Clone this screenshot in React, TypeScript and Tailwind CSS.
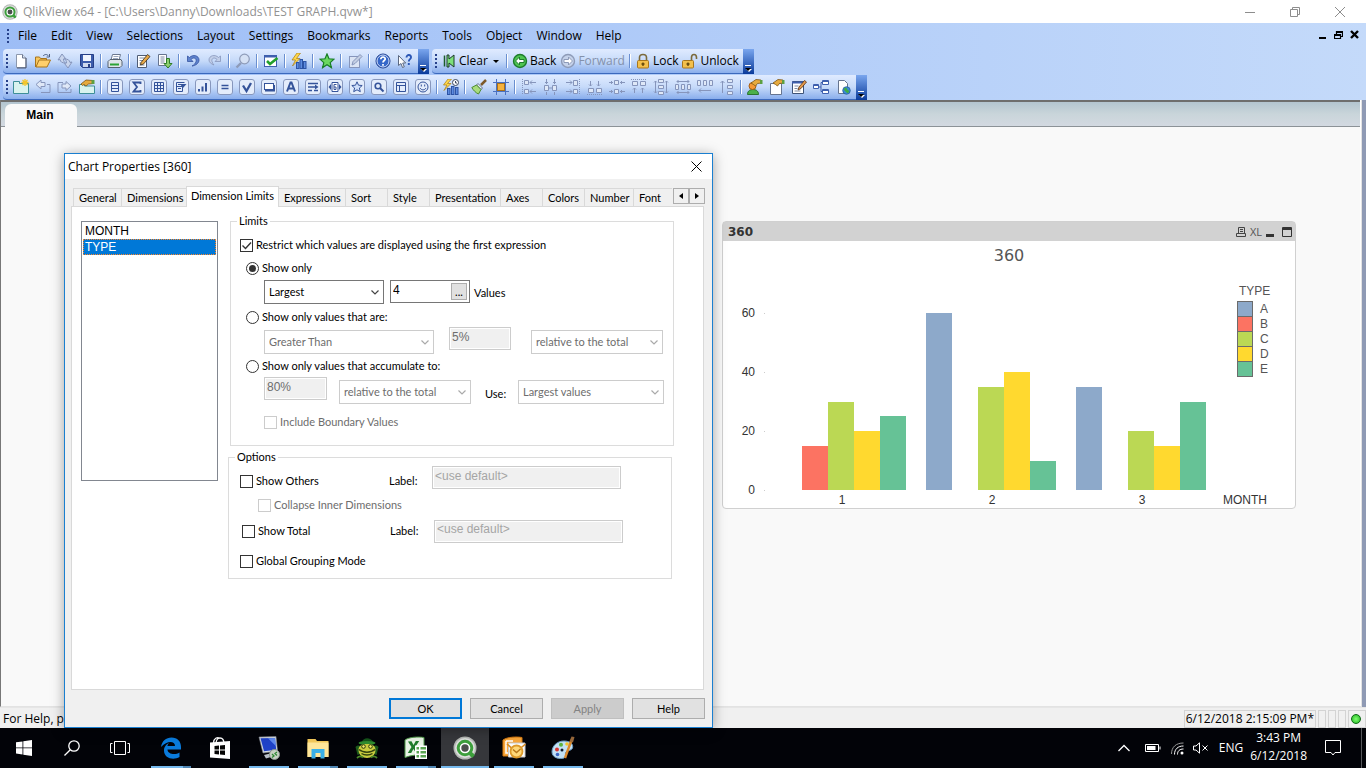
import React from "react";

type Kids = { children?: React.ReactNode };

const Ic = ({ children, size = 16 }: Kids & { size?: number }) => (
  <svg width={size} height={size} viewBox="0 0 16 16" fill="none" aria-hidden="true" className="shrink-0">
    {children}
  </svg>
);

const Framed = ({ children }: Kids) => (
  <Ic>
    <rect x="0.5" y="0.5" width="15" height="15" rx="2.5" fill="#e3ecfb" stroke="#8797bd" />
    {children}
  </Ic>
);

const N = "#34539a";
const G = "#8695bb";

const page = <path d="M3.5 1.5h6l3 3v10h-9z" fill="#fff" stroke="#66748f" />;

const fileIcons: Record<string, React.ReactNode> = {
  "New": <Ic><path d="M3.5 1.5h6l3.500 3.500v9.500h-9.500z" fill="#fff" stroke="#8c98ad" /><path d="M9.500 1.500v3.500h3.500" fill="#dbe4f2" stroke="#6c7890" /><path d="M13 5v10H4" stroke="#4e5970" /></Ic>,
  "Open": <Ic><path d="M.5 14v-10h4l1 1.500h6v3" fill="#f6c65d" stroke="#a8741b" /><path d="M1 14l3-7h11.500l-3.500 7z" fill="#ffcf6b" stroke="#a8741b" /><path d="M8 3c2-2 4-2 5.500 0M14.500 1v3h-3" stroke="#4c5f83" /></Ic>,
  "Reload document": <Ic><path d="M1 7l4-6 3.500 4.500-2 .5c0 2 .5 3 2 4-3.500 0-5-1-5.500-3.500z" fill="#c9d5ec" stroke={G} /><path d="M15 9l-4 6-3.500-4.500 2-.5c0-2-.5-3-2-4 3.500 0 5 1 5.500 3.500z" fill="#c9d5ec" stroke={G} /></Ic>,
  "Save": <Ic><path d="M1.500 1.500h13v13h-11l-2-2z" fill="#3c5cab" stroke="#263f86" /><rect x="4" y="2" width="8" height="6" fill="#f1f5fd" /><rect x="4" y="10" width="8" height="4" fill="#cfd9ed" /><rect x="9" y="11" width="2" height="3" fill="#263f86" /></Ic>,
  "Print": <Ic><path d="M4 7l1.500-5.500h8L12 7z" fill="#fff" stroke="#6b7890" /><path d="M6.500 3.500h5M6 5.500h5" stroke="#9ca9c0" /><path d="M1 8.500l2-2h11l1 2v4l-2 2H1z" fill="#dfe5ea" stroke="#55616f" /><path d="M3 11.500h9" stroke="#2ba335" strokeWidth="2" /></Ic>,
  "Edit Script": <Ic><path d="M2.500 2.500h9v12h-9z" fill="#fff" stroke="#4f5c74" /><path d="M4.500 5h5M4.500 7.500h4M4.500 10h3M4.500 12h5" stroke="#7e8ba3" /><path d="M6 9.500L12.500 1.500l2.500 2L8.500 11 5.500 12z" fill="#e8a948" stroke="#3a2a14" strokeWidth=".8" /></Ic>,
  "Run Script": <Ic><path d="M1.500 1.500h8v11h-8z" fill="#fff" stroke="#66748f" /><path d="M3.500 4h4M3.500 6h4M3.500 8h4M3.500 10h4" stroke="#7e8ba3" /><path d="M9.500 5.500h3v5H15l-4 4.500-4-4.500h2.500z" fill="#8ccf6d" stroke="#2f7d27" /></Ic>,
  "Undo": <Ic><path d="M2.500 3v5.500H8L6 6.500c2.500-3 6-1 5 2-.5 2-2 3.500-4 4.500 4-.5 7-3 7-6 0-4.500-6-6-9.500-2.500z" fill="#5f83ce" stroke="#35539f" strokeWidth=".8" /></Ic>,
  "Redo": <Ic><path d="M13.500 3v5.500H8l2-2c-2.500-3-6-1-5 2 .5 1.500 1 2.500 2 3.500C4 11 2 9 2 7c0-4.500 6-6 9.500-2.500z" fill="#c2cfe9" stroke={G} strokeWidth=".8" /></Ic>,
  "Search": <Ic><circle cx="9.500" cy="6" r="4.800" fill="#d5e1f4" stroke="#8e9bb8" strokeWidth="1.200" /><path d="M6 10l-4.500 4.500" stroke="#8e9bb8" strokeWidth="2.400" /></Ic>,
  "Current Selections": <Ic><rect x="1.500" y="2.500" width="12" height="11" fill="#fff" stroke="#3e5fae" /><path d="M1 3.500h13" stroke="#3e5fae" strokeWidth="2" /><path d="M4 8l3 3 7.500-6" stroke="#23a02c" strokeWidth="2.600" /></Ic>,
  "Quick Chart Wizard": <Ic><path d="M6 0L1 7H4.500L1.500 13 9 5.500H5.500L9.500 0z" fill="#ffd84c" stroke="#a87a10" strokeWidth=".7" /><rect x="5.500" y="9.500" width="2.500" height="6" fill="#5d8ce0" stroke="#2c53a5" /><rect x="9" y="6.500" width="2.500" height="9" fill="#5d8ce0" stroke="#2c53a5" /><rect x="12.500" y="8.500" width="2.500" height="7" fill="#5d8ce0" stroke="#2c53a5" /></Ic>,
  "Add Bookmark": <Ic><path d="M8 1l2 4.800 5 .4-3.800 3.400 1.200 5L8 11.800l-4.400 2.800 1.200-5L1 6.200l5-.4z" fill="#6bd860" stroke="#177d24" strokeWidth="1.200" /></Ic>,
  "Add Note": <Ic><rect x="2.500" y="3.500" width="10" height="11" fill="#dbe4f4" stroke={G} /><path d="M5 12l1-3.500 7-7 2 2-7 7z" fill="#c3cee3" stroke={G} /></Ic>,
  "Help Topics": <Ic><circle cx="8" cy="8" r="7" fill="#3567c9" stroke="#1f3f8f" /><circle cx="8" cy="8" r="6" stroke="#cfdcf7" /><path d="M5.800 6.200c0-3 4.600-2.800 4.400 0C10 7.600 8 7.600 8 9.500M8 11v1.800" stroke="#fff" strokeWidth="1.700" /></Ic>,
  "What's This?": <Ic><path d="M1.500 2.500v10l2.500-2 1.500 4 1.800-.7-1.600-3.800h3z" fill="#fff" stroke="#5b6880" /><path d="M9.500 4.500c0-3.500 5-3 4.500 0-.2 1.800-2.200 1.600-2.200 4M11.800 10v2" stroke="#2a56b5" strokeWidth="1.900" /></Ic>,
};

const sheetIcons: Record<string, React.ReactNode> = {
  "Add Sheet": <Ic><path d="M.5 14.500v-12h6v2h9v10z" fill="#d9f3ee" stroke="#3e8f98" /><path d="M12 0v7M8.500 3.500h7M9.500 1l5 5M14.500 1l-5 5" stroke="#f4c52b" strokeWidth="1.300" /></Ic>,
  "Promote Sheet": <Ic><path d="M1 5.500l5-4.500v2.500h4v4H6V10z" fill="#dfe8f7" stroke={G} /><path d="M6 13.500h9v-8h-3" stroke={G} /></Ic>,
  "Demote Sheet": <Ic><path d="M14 7L9 2.500V5H5v4h4v2.500z" fill="#dfe8f7" stroke={G} /><path d="M9 13.500H1v-10h5M9 13.500h5V10" stroke={G} /></Ic>,
  "Sheet Properties": <Ic><path d="M.5 14.500v-9h5v1.500h10v7.500z" fill="#d9f3ee" stroke="#3e8f98" /><path d="M2 5l5-4 7 .5.500 3-5 .500L7 7 5 5.500 3.500 6.500z" fill="#e6aa3e" stroke="#7d5614" strokeWidth=".8" /><rect x="12.500" y="1" width="3" height="4" fill="#5d9f40" /></Ic>,
};

const objectIcons: Record<string, React.ReactNode> = {
  "List Box": <Framed><path d="M4.500 3.500h7v9h-7zM4.500 6.500h7M4.500 9.500h7" stroke={N} /></Framed>,
  "Statistics Box": <Framed><path d="M11.500 5V3.500h-7L8 8l-3.500 4.500h7V11" stroke={N} strokeWidth="1.800" /></Framed>,
  "Table Box": <Framed><path d="M3.500 3.500h9v9h-9zM3.500 6.500h9M3.500 9.500h9M6.500 3.500v9M9.500 3.500v9" stroke={N} /></Framed>,
  "Multi Box": <Framed><path d="M3.500 3.500h8M3.500 3.500v9h6v-5M3.500 7.500h6M5 9.500h3M5 5.500h3" stroke={N} /><path d="M7 5h6.500L10 9z" fill={N} /></Framed>,
  "Chart": <Framed><path d="M4 12.500V10M7.500 12.500V7.500M11 12.500V4" stroke={N} strokeWidth="2" /></Framed>,
  "Input Box": <Framed><path d="M4.500 6.500h7M4.500 9.500h7" stroke={N} strokeWidth="1.600" /></Framed>,
  "Current Selections Box": <Framed><path d="M4 6.500l3.500 5.500 4.500-8" stroke={N} strokeWidth="2.300" /></Framed>,
  "Button": <Framed><rect x="3.500" y="4.500" width="9" height="6" fill="#fff" stroke={N} /><path d="M4 11.500h9V6" stroke={N} strokeWidth="2" /></Framed>,
  "Text Object": <Framed><path d="M4 12.500L7.500 3.500h1L12 12.500M5.500 9.500h5" stroke={N} strokeWidth="2" /></Framed>,
  "Line/Arrow Object": <Framed><path d="M3 4.500h10M3 8h8M3 11.500h4M9 11.500h4" stroke={N} strokeWidth="1.300" /><path d="M10 5.500L13.500 8 10 10.500z" fill={N} /></Framed>,
  "Slider/Calendar Object": <Framed><path d="M5 3.500h6v9H5z" fill="#fff" stroke={N} /><path d="M4 5L1.500 8 4 11zM12 5l2.500 3-2.500 3z" fill={N} /><path d="M9.500 5.500H7v5h2V8H7" stroke={N} /></Framed>,
  "Bookmark Object": <Framed><path d="M8 2.800l1.500 3.400 3.700.3-2.800 2.500.9 3.700L8 10.800l-3.300 1.900.9-3.700-2.800-2.500 3.700-.3z" fill="#cfdffa" stroke={N} /></Framed>,
  "Search Object": <Framed><circle cx="7" cy="7" r="2.800" stroke={N} strokeWidth="1.600" /><path d="M9 9l3.500 3.500" stroke={N} strokeWidth="2" /></Framed>,
  "Container": <Framed><path d="M3.500 3.500h9v9h-9zM3.500 6.500h9M6.500 6.500v6" stroke={N} /></Framed>,
  "Custom Object": <Framed><circle cx="8" cy="8" r="5" stroke={N} /><path d="M6.300 5.500v2M9.700 5.500v2M5 9c1.500 2.500 4.500 2.500 6 0" stroke={N} /></Framed>,
};

const chartWiz: Record<string, React.ReactNode> = {
  "Time Chart Wizard": <Ic><path d="M5 0L.5 6H4L1 11.500 8 4.500H4.500L8.500 0z" fill="#ffd84c" stroke="#a87a10" strokeWidth=".7" /><rect x="4.500" y="9.500" width="2.500" height="6" fill="#5d8ce0" stroke="#2c53a5" /><rect x="8.500" y="7.500" width="2.500" height="8" fill="#5d8ce0" stroke="#2c53a5" /><rect x="12.500" y="8.500" width="2.500" height="7" fill="#5d8ce0" stroke="#2c53a5" /><circle cx="12.500" cy="3.500" r="3" fill="#fff" stroke="#3b475e" /><path d="M12.500 2v2H14" stroke="#3b475e" /></Ic>,
};

const formatIcons: Record<string, React.ReactNode> = {
  "Format Painter": <Ic><path d="M15 1l-5 5" stroke="#7d5a2a" strokeWidth="2.500" /><path d="M7 4.500l4.500 4.500-1.500 1.500L5.500 6z" fill="#e7ecf5" stroke="#65728d" /><path d="M5.500 6L10 10.500 7.500 15C5 14 2 11 .8 8.500z" fill="#a9dc7e" stroke="#4d8b2f" /></Ic>,
  "Design Grid": <Ic><path d="M3.500 0v16M12.500 0v16M0 3.500h16M0 12.500h16" stroke="#4b72c2" /><rect x="4.500" y="4.500" width="7" height="7" fill="#f6b23c" stroke="#a8701a" /></Ic>,
};

const alignIcons: Record<string, React.ReactNode> = {
  "Align Left": <Ic><path d="M1.500 0v16" stroke={G} strokeDasharray="1 1" /><path d="M3.500 1.500h4v4h-4zM3.500 10.500h4v4h-4z" fill="#dfe8f7" stroke={G} /><path d="M9 3.500h6M11 1.500l-2 2 2 2M9 12.500h6M11 10.500l-2 2 2 2" stroke={G} /></Ic>,
  "Center Horizontally": <Ic><path d="M1.500 6.500h4v5h-4zM9.500 6.500h4v5h-4z" fill="#dfe8f7" stroke={G} /><path d="M3.500 0v5M11.500 0v5M2 3.500h3M10 3.500h3M3.500 16v-3M11.500 16v-3M6 9h3" stroke={G} /></Ic>,
  "Align Right": <Ic><path d="M14.500 0v16" stroke={G} strokeDasharray="1 1" /><path d="M8.500 1.500h4v5h-4zM8.500 10.500h4v4h-4z" fill="#dfe8f7" stroke={G} /><path d="M1 3.500h6M5 1.500l2 2-2 2M1 12.500h6M5 10.500l2 2-2 2" stroke={G} /></Ic>,
  "Align Bottom": <Ic><path d="M0 15.500h16" stroke={G} strokeDasharray="1 1" /><path d="M1.500 9.500h5v4h-5zM9.500 9.500h5v4h-5z" fill="#dfe8f7" stroke={G} /><path d="M3.500 2v5M2 5.500l1.500 1.500L5 5.500M11.500 2v5M10 5.500l1.500 1.500L13 5.500" stroke={G} /></Ic>,
  "Center Vertically": <Ic><path d="M5.500 1.500h4v4h-4zM5.500 10.500h4v4h-4z" fill="#dfe8f7" stroke={G} /><path d="M0 3.500h4M11 3.500h5M0 12.500h4M11 12.500h5M2.500 2v3M12.500 2v3M2.500 11v3M12.500 11v3" stroke={G} /></Ic>,
  "Align Top": <Ic><path d="M0 .5h16" stroke={G} strokeDasharray="1 1" /><path d="M1.500 2.500h5v4h-5zM9.500 2.500h5v4h-5z" fill="#dfe8f7" stroke={G} /><path d="M3.500 9v5M2 10.500L3.500 9 5 10.500M11.500 9v5M10 10.500L11.500 9l1.500 1.500" stroke={G} /></Ic>,
  "Space Horizontally": <Ic><path d="M5.500.5h5v3h-5zM5.500 6.500h5v3h-5zM5.500 12.500h5v3h-5z" fill="#dfe8f7" stroke={G} /><path d="M2.500 2v12M1 3.500L2.500 2 4 3.500M1 12.500L2.500 14 4 12.500M13.500 2v12M12 3.500L13.500 2 15 3.500M12 12.500l1.500 1.500 1.500-1.500" stroke={G} /></Ic>,
  "Space Vertically": <Ic><path d="M.5 5.500h3v5h-3zM6.500 5.500h3v5h-3zM12.500 5.500h3v5h-3z" fill="#dfe8f7" stroke={G} /><path d="M2 2.500h12M3.500 1L2 2.500 3.500 4M12.500 1L14 2.500 12.500 4M2 13.500h12M3.500 12L2 13.500 3.500 15M12.500 12l1.500 1.500-1.500 1.500" stroke={G} /></Ic>,
  "Adjust Left": <Ic><path d="M.5 1.500h3v5h-3zM6.500 1.500h3v5h-3zM12.500 1.500h3v5h-3z" fill="#dfe8f7" stroke={G} /><path d="M2 11.500h12M4 9.500l-2 2 2 2" stroke={G} /></Ic>,
  "Adjust Top": <Ic><path d="M8.500.5h5v3h-5zM8.500 6.500h5v3h-5zM8.500 12.500h5v3h-5z" fill="#dfe8f7" stroke={G} /><path d="M3.500 2v12M1.500 4l2-2 2 2" stroke={G} /></Ic>,
};

const hand = <><path d="M4 4l5-3.500 5 .5.500 3-4 .500-2 2.500-2-1.500z" fill="#e6aa3e" stroke="#7d5614" strokeWidth=".8" /><rect x="13" y="1" width="2.500" height="4" fill="#5d9f40" /></>;
const propIcons: Record<string, React.ReactNode> = {
  "User Preferences": <Ic><path d="M.5 15.500c0-4 3-5 5.500-5s5.500 1 5.500 5z" fill="#4bb04a" stroke="#2a7330" /><circle cx="5.500" cy="7" r="3.500" fill="#f59a35" stroke="#a85d12" />{hand}</Ic>,
  "Document Properties": <Ic><path d="M1.500 4.500h11v11h-11z" fill="#fff" stroke="#66748f" />{hand}</Ic>,
  "Edit Module": <Ic><path d="M1.500 2.500h11v12h-11z" fill="#fff" stroke="#3f5478" /><path d="M1 3.500h12" stroke="#3e5fae" strokeWidth="2" /><path d="M3.500 7h4M3.500 9.500h3M3.500 12h6" stroke="#7e8ba3" /><path d="M7 11l1-3 5.500-6.500 2 1.500-5.500 6.500z" fill="#e49a4c" stroke="#5b3413" strokeWidth=".8" /></Ic>,
  "Table Viewer": <Ic><path d="M5 8h3M8 3.500v9M8 3.500h2M8 12.500h2" stroke="#3e5fae" /><path d="M.5 5.500h5v4h-5zM9.500 1.500h6v4h-6zM9.500 10.500h6v4h-6z" fill="#fff" stroke="#3e5fae" /><path d="M.5 6.500h5M9.500 2.500h6M9.500 11.500h6" stroke="#3e5fae" /></Ic>,
  "WebView Mode": <Ic>{page}<circle cx="11.500" cy="11.500" r="3.800" fill="#3c87d8" stroke="#205a94" strokeWidth=".7" /><path d="M9 10c1-2 3-1 3 0s2 1 2 2.500-2 2-2.500 1S9 12 9 10z" fill="#3fae45" /></Ic>,
};

const Grip = () => (
  <span className="flex w-[7px] shrink-0 flex-col items-center justify-center gap-[2px]">
    {[0, 1, 2, 3].map((i) => (
      <i key={i} className="block size-[2px] bg-[#27418b]" />
    ))}
  </span>
);
const Sep = () => <span className="mx-[2px] my-[5px] w-[2px] shrink-0 border-l border-[#6a8fd0] bg-white" />;
const Tools = ({ set }: { set: Record<string, React.ReactNode> }) => (
  <>
    {Object.entries(set).map(([name, icon]) => (
      <button key={name} type="button" aria-label={name} className="flex w-[22px] shrink-0 items-center justify-center">
        {icon}
      </button>
    ))}
  </>
);
const pick = (...names: string[]) => Object.fromEntries(names.map((n) => [n, fileIcons[n]]));

const Bar = ({ children, label }: Kids & { label: string }) => (
  <div role="toolbar" aria-label={label} className="flex h-[25px] shrink-0">
    <div className="flex rounded-l-sm border-b border-[#3b69bd] bg-linear-to-b from-[#e0ebff] via-[#c6daf9] to-[#8aaeec]">
      <Grip />
      {children}
      <span className="w-[2px]" />
    </div>
    <button type="button" aria-label="Toolbar options" className="flex w-[11px] items-end justify-center bg-linear-to-b from-[#7aa6ee] to-[#093a9b] pb-[2px]">
      <svg width="7" height="7" viewBox="0 0 7 7" aria-hidden="true">
        <path d="M0 .5h6" stroke="#fff" />
        <path d="M1 4l3 3 3-3z" fill="#fff" />
        <path d="M0 3h6L3 6z" fill="#000" />
      </svg>
    </button>
  </div>
);

const TextTool = ({ icon, children, off }: Kids & { icon: React.ReactNode; off?: boolean }) => (
  <button type="button" disabled={off} className={`flex shrink-0 items-center gap-[2px] px-[2px] ${off ? "text-[#8491ab]" : ""}`}>
    {icon}
    {children}
  </button>
);

const roundArrow = (fill: string, stroke: string, left: boolean) => (
  <Ic>
    <circle cx="8" cy="8" r="6.500" fill={fill} stroke={stroke} strokeWidth="1.400" />
    <path d={left ? "M3.500 8l4-4v2.500h4.500v3H7.500V12z" : "M12.500 8l-4-4v2.500H4v3h4.500V12z"} fill="#fff" stroke={stroke} />
  </Ic>
);
const padlock = (open: boolean) => (
  <Ic>
    <path d={open ? "M9.500 8V4.500c0-4 5-4 5 0V6" : "M4.500 8V4.500c0-4 7-4 7 0V8"} stroke="#7b6a3c" strokeWidth="1.600" />
    <rect x={open ? 0.5 : 2.5} y="7.500" width="11" height="7.500" rx="1" fill="#f3c04c" stroke="#a8761d" />
    <path d={open ? "M6 9.500v3.500M4.500 11h3" : "M8 9.500v3.500M6.500 11h3"} stroke="#5e430c" strokeWidth="1.300" />
  </Ic>
);

const QLogo = ({ size }: { size: number }) => (
  <svg width={size} height={size} viewBox="0 0 24 24" aria-hidden="true" className="shrink-0">
    <circle cx="12" cy="12" r="11.500" fill="#b4b7b4" />
    <circle cx="12" cy="12" r="10" fill="#dcdedc" />
    <path d="M15.500 15.500l5 5" stroke="#3d9f3c" strokeWidth="4" />
    <circle cx="12" cy="12" r="6.800" fill="#fff" stroke="#3d9f3c" strokeWidth="3" />
    <circle cx="12" cy="12" r="3.700" fill="#4b4f4c" />
  </svg>
);

const menus = ["File", "Edit", "View", "Selections", "Layout", "Settings", "Bookmarks", "Reports", "Tools", "Object", "Window", "Help"];

function Header() {
  return (
    <header>
      <div className="flex h-[23px] items-center justify-between bg-white pr-[4px] pl-[2px] text-[#929292]">
        <div className="flex items-center gap-[5px] text-xs">
          <QLogo size={16} />
          <h1>QlikView x64 - [C:\Users\Danny\Downloads\TEST GRAPH.qvw*]</h1>
        </div>
        <div className="flex">
          {[
            ["Minimize", "M0 5.500h10"],
            ["Restore", "M.5 2.500h7v7h-7zM2.500 2.500v-2h7v7h-2"],
            ["Close", "M0 0l10 10M10 0L0 10"],
          ].map(([n, d]) => (
            <button key={n} type="button" aria-label={n} className="flex h-[21px] w-[45px] items-center justify-center">
              <svg width="10" height="10" viewBox="0 0 10 10" fill="none" stroke="#8d8d8d" aria-hidden="true"><path d={d} /></svg>
            </button>
          ))}
        </div>
      </div>
      <div className="flex flex-col bg-linear-to-r from-[#9dbdf6] to-[#c4dafa]">
        <div className="flex h-[26px] items-center justify-between pl-[4px]">
          <nav className="flex items-center self-stretch text-xs">
            <Grip />
            {menus.map((m) => (
              <button key={m} type="button" className="px-[7px]">{m}</button>
            ))}
          </nav>
          <div className="flex gap-[7px] pr-[7px] pb-[4px]">
            {[
              ["Minimize document", "M1 9h7v-2H1z", true],
              ["Restore document", "M.5 4.500h6v4h-6zM.5 5.500h6M2.500 4V1.500h6v5H7M2.500 2.500h6", false],
              ["Close document", "M1 1l7 7M8 1L1 8", false],
            ].map(([n, d, fill]) => (
              <button key={n as string} type="button" aria-label={n as string}>
                <svg width="9" height="9" viewBox="0 0 9 9" fill={fill ? "#000" : "none"} stroke={fill ? "none" : "#000"} strokeWidth={n === "Close document" ? 2.4 : 1.2} aria-hidden="true"><path d={d as string} /></svg>
              </button>
            ))}
          </div>
        </div>
        <div className="flex h-[26px] gap-[3px] pl-[3px] text-xs">
          <Bar label="Standard">
            <Tools set={pick("New", "Open", "Reload document", "Save")} />
            <Sep />
            <Tools set={pick("Print")} />
            <Sep />
            <Tools set={pick("Edit Script", "Run Script")} />
            <Sep />
            <Tools set={pick("Undo", "Redo")} />
            <Sep />
            <Tools set={pick("Search")} />
            <Sep />
            <Tools set={pick("Current Selections")} />
            <Sep />
            <Tools set={pick("Quick Chart Wizard")} />
            <Sep />
            <Tools set={pick("Add Bookmark")} />
            <Sep />
            <Tools set={pick("Add Note")} />
            <Sep />
            <Tools set={pick("Help Topics", "What's This?")} />
          </Bar>
          <Bar label="Navigation">
            <TextTool icon={<Ic><path d="M3.500 2.500v11" stroke="#1c5c2a" strokeWidth="1.500" /><path d="M6 2h2v4l5-4v12L8 10v4H6z" fill="#7de07a" stroke="#1c3a2a" /></Ic>}>
              Clear
              <svg width="6" height="3" viewBox="0 0 6 3" className="mx-[3px]" aria-hidden="true"><path d="M0 0h6L3 3z" /></svg>
            </TextTool>
            <Sep />
            <TextTool icon={roundArrow("#4fc552", "#1d7c2b", true)}>Back</TextTool>
            <TextTool off icon={roundArrow("#c5d2ea", "#8e9bb8", false)}>Forward</TextTool>
            <Sep />
            <TextTool icon={padlock(false)}>Lock</TextTool>
            <TextTool icon={padlock(true)}>Unlock</TextTool>
          </Bar>
        </div>
        <div className="flex pl-[3px]">
          <Bar label="Sheet and design">
            <Tools set={sheetIcons} />
            <Sep />
            <Tools set={objectIcons} />
            <Sep />
            <Tools set={chartWiz} />
            <Sep />
            <Tools set={formatIcons} />
            <Sep />
            <Tools set={alignIcons} />
            <Sep />
            <Tools set={propIcons} />
          </Bar>
        </div>
      </div>
    </header>
  );
}

/* ---------- chart object ---------- */

const colors: Record<string, string> = { A: "#8da9ca", B: "#fc7362", C: "#bbd854", D: "#ffd92f", E: "#66c296" };
const types = ["A", "B", "C", "D", "E"];
const data: [string, number, number[]][] = [
  ["1", 53, [0, 15, 30, 20, 25]],
  ["2", 203, [60, 0, 35, 40, 10]],
  ["3", 353, [35, 0, 20, 15, 30]],
];
const barWidth = 26;
const base = 249;
const yOf = (v: number) => Math.round(base - v * 2.95);

function ChartObject() {
  return (
    <section aria-label="Chart 360" className="absolute top-[121px] left-[721px] w-[574px] rounded-sm border border-[#d0d0d0] bg-white font-['Liberation_Sans',sans-serif]">
      <div className="flex h-[19px] items-center justify-between bg-[#d2d2d2] pr-[3px] pl-[5px]">
        <h2 className="font-['DejaVu_Sans',sans-serif] text-xs leading-4 font-bold text-[#333]">360</h2>
        <div className="flex items-center gap-[4px] text-[#555]">
          <button type="button" aria-label="Print">
            <svg width="10" height="10" viewBox="0 0 10 10" fill="none" stroke="#444" aria-hidden="true"><path d="M2.500 6V.5h6v6M.5 6.500h9v3h-9zM4 2.500h3M4 4.500h3" /></svg>
          </button>
          <button type="button" className="font-['Open_Sans',sans-serif] text-[11px] leading-4">XL</button>
          <button type="button" aria-label="Minimize">
            <svg width="9" height="10" viewBox="0 0 9 10" aria-hidden="true"><path d="M0 7h8v3H0z" fill="#333" /></svg>
          </button>
          <button type="button" aria-label="Maximize" className="pl-[3px]">
            <svg width="10" height="10" viewBox="0 0 10 10" fill="none" stroke="#333" aria-hidden="true"><path d="M.5.5h9v9h-9zM0 1.500h10M0 2.500h10" /></svg>
          </button>
        </div>
      </div>
      <svg viewBox="0 0 572 267" className="block w-full" role="img" aria-label="Bar chart of 360 by MONTH and TYPE" fontSize="12" fill="#333">
        <text x="286" y="20" textAnchor="middle" fontSize="16" fill="#555" className="font-['DejaVu_Sans',sans-serif]">360</text>
        {[0, 20, 40, 60].map((v) => (
          <g key={v}>
            <text x="32" y={yOf(v) + 4} textAnchor="end">{v}</text>
            <rect x="41" y={yOf(v)} width="1" height="1" fill="#ccc" />
          </g>
        ))}
        {data.map(([month, x, vals]) => (
          <g key={month}>
            {vals.map((v, i) => (
              <rect key={types[i]} x={x + i * barWidth} y={yOf(v)} width={barWidth} height={base - yOf(v)} fill={colors[types[i]]} />
            ))}
            <text x={x + 66} y="263" textAnchor="middle">{month}</text>
          </g>
        ))}
        <text x="500" y="263">MONTH</text>
        <text x="516" y="54" fill="#555">TYPE</text>
        {types.map((t, i) => (
          <g key={t}>
            <rect x="514.5" y={60.5 + i * 15} width="15" height="15" fill={colors[t]} stroke="#6b6b6b" />
            <text x="537" y={72 + i * 15} fill="#555">{t}</text>
          </g>
        ))}
      </svg>
    </section>
  );
}

/* ---------- dialog ---------- */

const Check = ({ children, checked, disabled }: Kids & { checked?: boolean; disabled?: boolean }) => (
  <label className={`flex h-4 items-center gap-[3px] ${disabled ? "text-[#6d6d6d]" : ""}`}>
    <span className="relative flex">
      <input type="checkbox" defaultChecked={checked} disabled={disabled} className="peer size-[13px] appearance-none border border-[#333] bg-white disabled:border-[#ccc]" />
      <svg width="13" height="13" viewBox="0 0 13 13" fill="none" stroke="#333" strokeWidth="1.400" aria-hidden="true" className="pointer-events-none absolute inset-0 opacity-0 peer-checked:opacity-100"><path d="M2.500 6.500L5.500 9.500l5.500-6" /></svg>
    </span>
    {children}
  </label>
);

const Radio = ({ children, checked }: Kids & { checked?: boolean }) => (
  <label className="flex h-4 items-center gap-[3px]">
    <span className="relative flex">
      <input type="radio" name="limit" defaultChecked={checked} className="peer size-[13px] appearance-none rounded-full border border-[#333] bg-white" />
      <span className="pointer-events-none absolute inset-[3px] rounded-full bg-[#333] opacity-0 peer-checked:opacity-100" />
    </span>
    {children}
  </label>
);

const Select = ({ value, label, id, disabled, w }: { value: string; label: string; id?: string; disabled?: boolean; w: string }) => (
  <span className={`relative flex h-6 ${w}`}>
    <select id={id} aria-label={id ? undefined : label} disabled={disabled} className="w-full appearance-none border border-[#767676] bg-white px-[4px] text-black opacity-100 disabled:border-[#ccc] disabled:text-[#6d6d6d]">
      <option>{value}</option>
    </select>
    <svg width="8" height="5" viewBox="0 0 8 5" fill="none" stroke={disabled ? "#aaa" : "#444"} strokeWidth="1.200" aria-hidden="true" className="pointer-events-none absolute top-[10px] right-[5px]"><path d="M.5.500l3.500 3.500L7.500.500" /></svg>
  </span>
);

const GrayInput = ({ value, label, id, w, hint }: { value: string; label: string; id?: string; w: string; hint?: boolean }) => (
  <input id={id} aria-label={id ? undefined : label} type="text" disabled defaultValue={value} className={`h-[23px] border border-[#ccc] bg-[#f0f0f0] px-[2px] pb-[4px] font-['Liberation_Sans',sans-serif] text-xs shadow-[inset_0_0_0_1px_#fff] ${w} ${hint ? "text-[#a5a5a5]" : "text-[#6d6d6d]"}`} />
);

const tabs: [string, string][] = [
  ["General", "w-[48px]"],
  ["Dimensions", "w-[65px]"],
  ["Dimension Limits", "w-[93px]"],
  ["Expressions", "w-[66px]"],
  ["Sort", "w-[42px]"],
  ["Style", "w-[42px]"],
  ["Presentation", "w-[71px]"],
  ["Axes", "w-[42px]"],
  ["Colors", "w-[42px]"],
  ["Number", "w-[49px]"],
  ["Font", "w-[39px]"],
];

function Dialog() {
  return (
    <div role="dialog" aria-label="Chart Properties [360]" className="absolute top-[153px] left-[64px] z-10 flex w-[649px] flex-col border border-[#1a7fd0] bg-[#f0f0f0] font-['Lato','Liberation_Sans',sans-serif] text-[11px] leading-4 text-black shadow-[0_2px_12px_rgba(0,0,0,0.35)]">
      <div className="flex h-[25px] items-center justify-between bg-white pr-[10px] pl-[3px] font-['Open_Sans',sans-serif] text-xs">
        <h2>Chart Properties [360]</h2>
        <button type="button" aria-label="Close">
          <svg width="11" height="11" viewBox="0 0 11 11" stroke="#000" aria-hidden="true"><path d="M.5.500l10 10M10.500.500l-10 10" /></svg>
        </button>
      </div>
      <div className="flex h-[27px] items-end justify-between px-[8px] pr-[7px]">
        <div role="tablist" className="flex items-end">
          {tabs.map(([t, w], i) =>
            i === 2 ? (
              <button key={t} type="button" role="tab" aria-selected="true" className={`z-10 -mb-px h-[21px] border border-b-0 border-[#d9d9d9] bg-white pb-[2px] text-center whitespace-nowrap ${w}`}>{t}</button>
            ) : (
              <button key={t} type="button" role="tab" aria-selected="false" className={`h-[18px] border-t border-[#d9d9d9] bg-[#f0f0f0] pl-[5px] text-left whitespace-nowrap ${i === 3 ? "" : "border-l"} ${w}`}>{t}</button>
            )
          )}
        </div>
        <div className="flex self-start pt-[9px]">
          {["M4 0L0 3l4 3z", "M0 0l4 3-4 3z"].map((d, i) => (
            <button key={d} type="button" aria-label={i ? "Next tabs" : "Previous tabs"} className="flex h-4 w-4 items-center justify-center border border-[#adadad] bg-[#f0f0f0]">
              <svg width="4" height="6" viewBox="0 0 4 6" aria-hidden="true"><path d={d} /></svg>
            </button>
          ))}
        </div>
      </div>
      <div className="mr-[8px] ml-[6px] flex h-[484px] border border-[#d9d9d9] bg-white pt-[6px] pr-[29px] pl-[9px]">
        <ul role="listbox" aria-label="Dimensions" className="mt-[8px] h-[260px] w-[137px] shrink-0 border border-[#828790] p-px font-['Liberation_Sans',sans-serif] text-xs leading-4">
          <li role="option" aria-selected="false" className="px-[2px] leading-4">MONTH</li>
          <li role="option" aria-selected="true" className="h-4 bg-[#0078d7] px-[2px] leading-4 text-white outline-1 -outline-offset-1 outline-[#ff8728] outline-dotted">TYPE</li>
        </ul>
        <div className="ml-[10px] flex flex-1 flex-col">
          <fieldset className="ml-[2px] border border-[#dcdcdc] pb-[15px] pl-[9px]">
            <legend className="-ml-[3px] h-4 px-[2px]">Limits</legend>
            <div className="pt-[8px]"><Check checked>Restrict which values are displayed using the first expression</Check></div>
            <div className="flex flex-col pl-[6px]">
              <div className="mt-[7px]"><Radio checked>Show only</Radio></div>
              <div className="mt-[4px] flex gap-[6px] pl-[18px]">
                <Select label="Direction" value="Largest" w="w-[120px]" />
                <span className="flex h-[23px] w-[80px] border border-[#767676] bg-white p-[2px]">
                  <input id="limit-count" type="text" defaultValue="4" className="w-full min-w-0 pb-[4px] font-['Liberation_Sans',sans-serif] text-xs outline-none" />
                  <button type="button" aria-label="Edit expression" className="h-[17px] w-4 shrink-0 border border-[#adadad] bg-[#e1e1e1] leading-4">...</button>
                </span>
                <label htmlFor="limit-count" className="-ml-[2px] self-end pb-[3px]">Values</label>
              </div>
              <div className="mt-[5px]"><Radio>Show only values that are:</Radio></div>
              <div className="mt-[2px] flex h-[27px] items-end pl-[18px]">
                <Select disabled label="Comparison" value="Greater Than" w="w-[170px]" />
                <span className="ml-[15px] flex self-start"><GrayInput label="Threshold" value="5%" w="w-[62px]" /></span>
                <span className="ml-[20px]"><Select disabled label="Relation" value="relative to the total" w="w-[132px]" /></span>
              </div>
              <div className="mt-[4px]"><Radio>Show only values that accumulate to:</Radio></div>
              <div className="mt-[3px] flex h-[27px] items-end pl-[18px]">
                <span className="flex self-start"><GrayInput label="Accumulated share" value="80%" w="w-[63px]" /></span>
                <span className="ml-[12px]"><Select disabled label="Accumulation relation" value="relative to the total" w="w-[132px]" /></span>
                <label htmlFor="use-values" className="ml-[14px] w-[33px] pb-[2px]">Use:</label>
                <Select disabled id="use-values" label="Use" value="Largest values" w="w-[146px]" />
              </div>
              <div className="mt-[10px] pl-[18px]"><Check disabled>Include Boundary Values</Check></div>
            </div>
          </fieldset>
          <fieldset className="mt-[3px] mr-[2px] border border-[#dcdcdc] pb-[9px] pl-[11px]">
            <legend className="-ml-[5px] h-4 px-[2px]">Options</legend>
            <div className="flex h-6 items-end">
              <span className="w-[149px]"><Check>Show Others</Check></span>
              <label htmlFor="others-label" className="w-[43px]">Label:</label>
              <GrayInput hint id="others-label" label="Label" value="<use default>" w="w-[189px]" />
            </div>
            <div className="mt-[8px] pl-[18px]"><Check disabled>Collapse Inner Dimensions</Check></div>
            <div className="mt-[6px] flex h-6 items-center pl-[2px]">
              <span className="w-[148px]"><Check>Show Total</Check></span>
              <label htmlFor="total-label" className="w-[44px]">Label:</label>
              <GrayInput hint id="total-label" label="Label" value="<use default>" w="w-[189px]" />
            </div>
            <div className="mt-[10px]"><Check>Global Grouping Mode</Check></div>
          </fieldset>
        </div>
      </div>
      <div className="flex justify-end gap-[8px] pt-[8px] pr-[7px] pb-[8px]">
        <button type="button" className="h-[21px] w-[73px] border-2 border-[#0078d7] bg-[#e1e1e1]">OK</button>
        <button type="button" className="h-[21px] w-[73px] border border-[#adadad] bg-[#e1e1e1]">Cancel</button>
        <button type="button" disabled className="h-[21px] w-[73px] border border-[#bfbfbf] bg-[#ccc] text-[#838383]">Apply</button>
        <button type="button" className="h-[21px] w-[73px] border border-[#adadad] bg-[#e1e1e1]">Help</button>
      </div>
    </div>
  );
}

/* ---------- taskbar ---------- */

const T = ({ children, size = 24 }: Kids & { size?: number }) => (
  <svg width={size} height={size} viewBox="0 0 24 24" fill="none" aria-hidden="true">{children}</svg>
);

const system: [string, React.ReactNode][] = [
  ["Start", <svg width="16" height="16" viewBox="0 0 16 16" fill="#fff" aria-hidden="true"><path d="M0 2.300L6.500 1.400v6.100H0zM7.300 1.300L16 0v7.500H7.300zM0 8.300h6.500v6.200L0 13.600zM7.300 8.300H16V16l-8.700-1.300z" /></svg>],
  ["Search", <svg width="16" height="16" viewBox="0 0 16 16" fill="none" stroke="#fff" strokeWidth="1.300" aria-hidden="true"><circle cx="10" cy="6" r="5.200" /><path d="M6.300 9.700L.5 15.500" /></svg>],
  ["Task View", <svg width="20" height="16" viewBox="0 0 20 16" fill="none" stroke="#fff" aria-hidden="true"><path d="M4.500 1.500h11v13h-11zM2.500 3.500H.5v9h2M17.500 3.500h2v9h-2" /></svg>],
];

const apps: { name: string; icon: React.ReactNode; run?: boolean; many?: boolean; active?: boolean }[] = [
  { name: "Edge", run: true, many: true, icon: <T><path d="M2 11C3 5 7 1.500 12.500 1.500 18.500 1.500 22 5.500 22 11v2.500H8.500c0 4.500 7.500 6 12 3v4.500c-6 3.500-15.500 1.500-15.500-6.500 0-4 2.500-6.500 5-7.500-1 1-1.500 2-1.600 3h7.600c0-5-7.500-6-14 1z" fill="#0a7bdc" /></T> },
  { name: "Store", icon: <T><path d="M8 8c0-8 8-8 8 0M5.500 7c0-5 4-6 6-5" stroke="#fff" strokeWidth="1.300" /><path d="M2 6.500L22 5v18L2 21.500z" fill="#fff" /><path d="M6.500 10l4.500-.5v4H6.500zM12 9.400l5-.5v4.600h-5zM6.500 14.500H11v4l-4.500-.5zM12 14.500h5V19l-5-.4z" fill="#050505" /></T> },
  { name: "Remote Desktop", run: true, icon: <T><path d="M2 1l17-.5L20.500 15 6 17z" fill="#d7dce2" stroke="#7d858f" strokeWidth=".6" /><path d="M3.500 2.300L18 2l1.200 11.800L7 15.300z" fill="#1f42c8" /><path d="M11 2.200L18 2l.8 8z" fill="#5f8af0" /><path d="M7 19l8-2 2 3-8 2.500z" fill="#b9c0c8" /><circle cx="17.500" cy="18.500" r="5" fill="#c6d1c4" stroke="#87938a" /><path d="M15 18l2 2-2 1.500M20 16l-2 1.500 2 2" stroke="#2f8a34" strokeWidth="1.300" /></T> },
  { name: "File Explorer", run: true, many: true, icon: <T><path d="M1.500 3h8l1.500 2h11.500v16h-21z" fill="#f4c95a" /><path d="M1.500 6.500h21V21h-21z" fill="#ffe69a" /><path d="M5.500 22.500v-9.500h13v9.500h-4V17h-5v5.500z" fill="#3ab0e8" /></T> },
  { name: "Toad", run: true, icon: <T><path d="M7 6c1-5 9-5 11 0z" fill="#14531a" /><ellipse cx="12" cy="7" rx="8.500" ry="2" fill="#2e8b2f" /><path d="M.5 11c3-3 6-1 6 2s-2 6-4 6zM23.500 11c-3-3-6-1-6 2s2 6 4 6z" fill="#1d5a1b" /><path d="M3.500 14c0-5 4-6 8.500-6s8.500 1 8.500 6-4 8-8.500 8-8.500-3-8.500-8z" fill="#c8cc3e" /><path d="M4 13.500c4 3.500 12 3.500 16 0M6.500 17.500c3 2 8 2 11 0" stroke="#33430f" strokeWidth="1.500" /><circle cx="8.500" cy="10.500" r="1.800" fill="#f1e86b" stroke="#2b3b0c" /><circle cx="15.500" cy="10.500" r="1.800" fill="#f1e86b" stroke="#2b3b0c" /><path d="M2 22c2-2 4-2 6-.5M22 22c-2-2-4-2-6-.5" stroke="#4c8a2a" strokeWidth="1.800" /></T> },
  { name: "Excel", run: true, many: true, icon: <T><path d="M1 4c4-3 13-3.500 19-2.500V18c-6 1-13 1-19 3.500z" fill="#e9f3e5" stroke="#4f9a48" /><path d="M4 5.500l3.500-.3L9.500 9l2.300-4h3.400L11.300 11l4 5.500h-3.600L9.400 13l-2.200 4H3.800l3.700-6z" fill="#217c2c" /><path d="M11 9.500h12v13.500H11z" fill="#fff" /><path d="M12.500 11h2.500v2.500h-2.500zM16.500 11H22v2.500h-5.500zM12.500 15H15v2.500h-2.500zM16.500 15H22v2.500h-5.500zM12.500 19H15v2.500h-2.500zM16.500 19H22v2.500h-5.500z" fill="#5aa552" /></T> },
  { name: "QlikView", run: true, active: true, icon: <QLogo size={24} /> },
  { name: "Outlook", run: true, icon: <T><path d="M1 4c4-3 13-3.500 19-2.500V20H1z" fill="#f9a73b" stroke="#d67a10" /><path d="M4 5h7M4 5v12h5" stroke="#fff" strokeWidth="1.500" /><path d="M6.500 7h16.500v14H6.500z" fill="#fdfdfd" stroke="#c9c9c9" /><path d="M5 8l9 8 9.500-8" stroke="#d98a1d" strokeWidth="1.600" /><circle cx="14.500" cy="15.500" r="6" fill="#ffd878" stroke="#dd9a2a" strokeWidth="1.800" /><path d="M11 13.500l3.500 3 4-3.500" stroke="#b8781a" strokeWidth="1.500" /></T> },
  { name: "Paint", run: true, icon: <T><path d="M1 16c0-6 5-11 12-11 6 0 9.500 3 8.500 7-1 3-5 2-6.500 4s1 4-2 6c-4 1.500-12 0-12-6z" fill="#c3e1f5" stroke="#6b9cc4" /><circle cx="6" cy="13.500" r="2" fill="#d8332f" /><circle cx="10" cy="8.800" r="2" fill="#5cb33e" /><circle cx="16" cy="8" r="1.800" fill="#f4c52b" /><circle cx="6.500" cy="18.500" r="1.800" fill="#3b66c4" /><circle cx="11" cy="14" r="1.500" fill="#101a2a" /><path d="M20.500 4L14 22" stroke="#dd8a2c" strokeWidth="2.400" /><path d="M18.500 5.500l2-5 3 .5-1.500 5.500z" fill="#9b6a3c" /></T> },
];

function Taskbar() {
  return (
    <footer className="flex h-10 shrink-0 items-stretch justify-between bg-[#020308] font-['Open_Sans',sans-serif] text-xs text-white">
      <div className="flex">
        {system.map(([name, icon]) => (
          <button key={name} type="button" aria-label={name} className="flex w-12 items-center justify-center">{icon}</button>
        ))}
        <div className="ml-[3px] flex gap-px">
          {apps.map(({ name, icon, run, many, active }) => (
            <button key={name} type="button" aria-label={name} className={`flex w-12 flex-col items-center ${active ? "bg-[#36373b]" : ""}`}>
              <span className="flex flex-1 items-center pt-[2px]">{icon}</span>
              <span className={`flex h-[2px] justify-end ${active ? "w-12" : "w-10"} ${run ? "bg-[#76b9ed]" : ""}`}>
                {many && <i className="w-[8px] bg-[#5086b3]" />}
              </span>
            </button>
          ))}
        </div>
      </div>
      <div className="flex items-center">
        <button type="button" aria-label="Show hidden icons" className="mr-[15px]">
          <svg width="12" height="8" viewBox="0 0 12 8" fill="none" stroke="#fff" strokeWidth="1.300" aria-hidden="true"><path d="M.5 7L6 1.500 11.500 7" /></svg>
        </button>
        <button type="button" aria-label="Battery" className="mr-[10px]">
          <svg width="16" height="10" viewBox="0 0 16 10" fill="none" stroke="#fff" aria-hidden="true"><path d="M.5 1.500h13v7H.5zM15 3.500v3" /><path d="M2 3h8.500v4H2z" fill="#fff" stroke="none" /></svg>
        </button>
        <button type="button" aria-label="Network" className="mr-[9px]">
          <svg width="13" height="13" viewBox="0 0 13 13" fill="none" stroke="#fff" aria-hidden="true"><path d="M.5 12C.5 5 5 1 12.500 1" stroke="#9a9a9a" /><path d="M3.500 12.500C3.500 7 7 4 12.500 4M6.500 12.500C6.500 9 8.500 7 12.500 7" /><circle cx="11" cy="11" r="1.500" fill="#fff" stroke="none" /></svg>
        </button>
        <button type="button" aria-label="Volume muted" className="mr-[11px]">
          <svg width="15" height="12" viewBox="0 0 15 12" fill="none" stroke="#fff" aria-hidden="true"><path d="M.5 4h2.500L6.500.8v10.400L3 8H.5zM9.500 3.500l5 5M14.500 3.500l-5 5" /></svg>
        </button>
        <button type="button" className="mr-[7px]">ENG</button>
        <time className="mr-[18px] block pb-[2px] text-center leading-[18px]">3:43 PM<br />6/12/2018</time>
        <button type="button" aria-label="Notifications" className="mr-[20px]">
          <svg width="16" height="16" viewBox="0 0 16 16" fill="none" stroke="#fff" aria-hidden="true"><path d="M.5.500h15v12H10l-2 2.500-2-2.500H.5z" /></svg>
        </button>
        <span className="mr-[4px] w-px self-stretch bg-[#55565a]" />
      </div>
    </footer>
  );
}

export default function App() {
  return (
    <div className="relative flex min-h-screen flex-col bg-[#f0f0f0] font-['Open_Sans',sans-serif] text-black">
      <Header />
      <main className="flex flex-1 bg-[#8f9ab4] pr-[4px]">
        <div className="flex flex-1 border-r border-b border-l border-[#e3e3e3] border-l-[#777] bg-white pr-px">
          <div className="relative flex flex-1 flex-col bg-[#f9f9f9]">
            <div className="flex h-[27px] items-end border-t-2 border-b border-t-[#6e6e6e] border-b-[#8c9297] bg-linear-to-b from-[#b3c5d0] via-[#c9d5da] to-[#d3d9e1] pl-[4px]">
              <button type="button" className="-mb-px h-[23px] w-[72px] rounded-t-md bg-[#f9f9f9] pr-[2px] pb-[2px] font-['Liberation_Sans',sans-serif] text-xs font-bold">Main</button>
            </div>
            <ChartObject />
          </div>
        </div>
      </main>
      <div className="flex h-[21px] shrink-0 items-end justify-between border-t border-[#e6e6e6] pl-[3px] text-xs leading-[18px]">
        <span>For Help, press F1</span>
        <span className="flex gap-[2px]">
          <span className="border border-[#d3d3d3] px-px leading-4">6/12/2018 2:15:09 PM*</span>
          {[0, 1, 2].map((i) => (
            <span key={i} className="w-[8px] border border-[#d3d3d3]" />
          ))}
          <span className="flex w-[18px] items-center border border-[#d3d3d3]">
            <i className="ml-[2px] size-[10px] rounded-full border border-[#0b6a12] bg-radial from-[#7dff6e] to-[#10b41a]" />
          </span>
        </span>
      </div>
      <Taskbar />
      <Dialog />
    </div>
  );
}
